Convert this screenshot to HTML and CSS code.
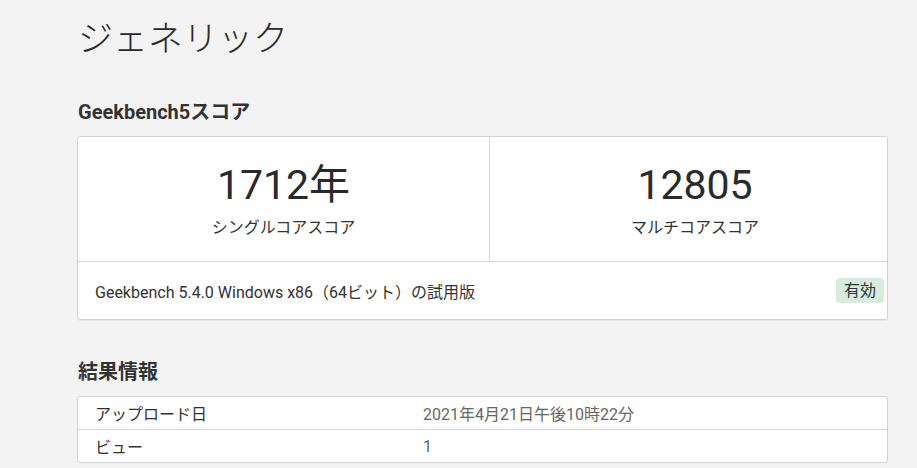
FILE: index.html
```html
<!DOCTYPE html>
<html lang="ja">
<head>
<meta charset="utf-8">
<link rel="stylesheet" href="styles.css">
</head>
<body>
<main class="page">
  <h1 class="title">ジェネリック</h1>
  <h2 class="section-title first">Geekbench5スコア</h2>
  <div class="card">
    <div class="scores">
      <div class="score">
        <div class="score-value">1712年</div>
        <div class="score-label">シングルコアスコア</div>
      </div>
      <div class="score right">
        <div class="score-value">12805</div>
        <div class="score-label">マルチコアスコア</div>
      </div>
    </div>
    <div class="card-footer">
      <span class="version">Geekbench 5.4.0 Windows x86（64ビット）の試用版</span>
      <span class="badge">有効</span>
    </div>
  </div>
  <h2 class="section-title">結果情報</h2>
  <div class="table">
    <div class="row">
      <div class="cell key">アップロード日</div>
      <div class="cell val">2021年4月21日午後10時22分</div>
    </div>
    <div class="row">
      <div class="cell key">ビュー</div>
      <div class="cell val">1</div>
    </div>
  </div>
</main>
</body>
</html>
```

FILE: styles.css
```css
html, body {
  margin: 0;
  padding: 0;
  background: #f3f3f3;
}
body {
  font-family: Roboto, "Noto Sans CJK JP", sans-serif;
  color: #333;
}
.page {
  width: 811px;
  margin-left: 77px;
  padding-top: 12px;
}
.title {
  margin: 0 0 0 1px;
  font-family: "Noto Sans CJK JP", sans-serif;
  font-weight: 300;
  font-size: 35px;
  line-height: 48px;
  color: #2a2a2a;
}
.section-title {
  margin: 38px 0 10px 1px;
  font-size: 20px;
  font-weight: 700;
  line-height: 28px;
  color: #333;
}
.section-title.first {
  margin-top: 38px;
  margin-bottom: 10px;
}
.card {
  background: #fff;
  border: 1px solid #d2d2d2;
  border-radius: 3px;
  box-shadow: 0 1px 1px rgba(0,0,0,0.05);
}
.scores {
  display: grid;
  grid-template-columns: 411px 1fr;
  border-bottom: 1px solid #d6d6d6;
}
.score {
  height: 124px;
  display: flex;
  flex-direction: column;
  align-items: center;
  padding-top: 24px;
  box-sizing: border-box;
}
.score.right {
  border-left: 1px solid #d6d6d6;
  padding-left: 13px;
}
.score-value {
  font-size: 41px;
  line-height: 48px;
  color: #2a2a2a;
}
.score-label {
  margin-top: 8px;
  font-size: 16px;
  line-height: 22px;
  color: #333;
}
.card-footer {
  height: 57px;
  display: flex;
  align-items: center;
  justify-content: space-between;
  padding: 0 3px 0 17px;
}
.version {
  font-size: 16px;
  color: #333;
}
.badge {
  background: #d6ecdc;
  color: #333;
  font-size: 16px;
  line-height: 25px;
  padding: 0 8px;
  border-radius: 4px;
}
.table {
  background: #fff;
  border: 1px solid #d2d2d2;
  border-radius: 3px;
}
.row {
  display: grid;
  grid-template-columns: 328px 1fr;
  height: 32px;
  align-items: center;
}
.row + .row {
  border-top: 1px solid #d6d6d6;
}
.cell {
  font-size: 16px;
  padding-left: 17px;
}
.key { color: #333; }
.val { color: #666; }
```
